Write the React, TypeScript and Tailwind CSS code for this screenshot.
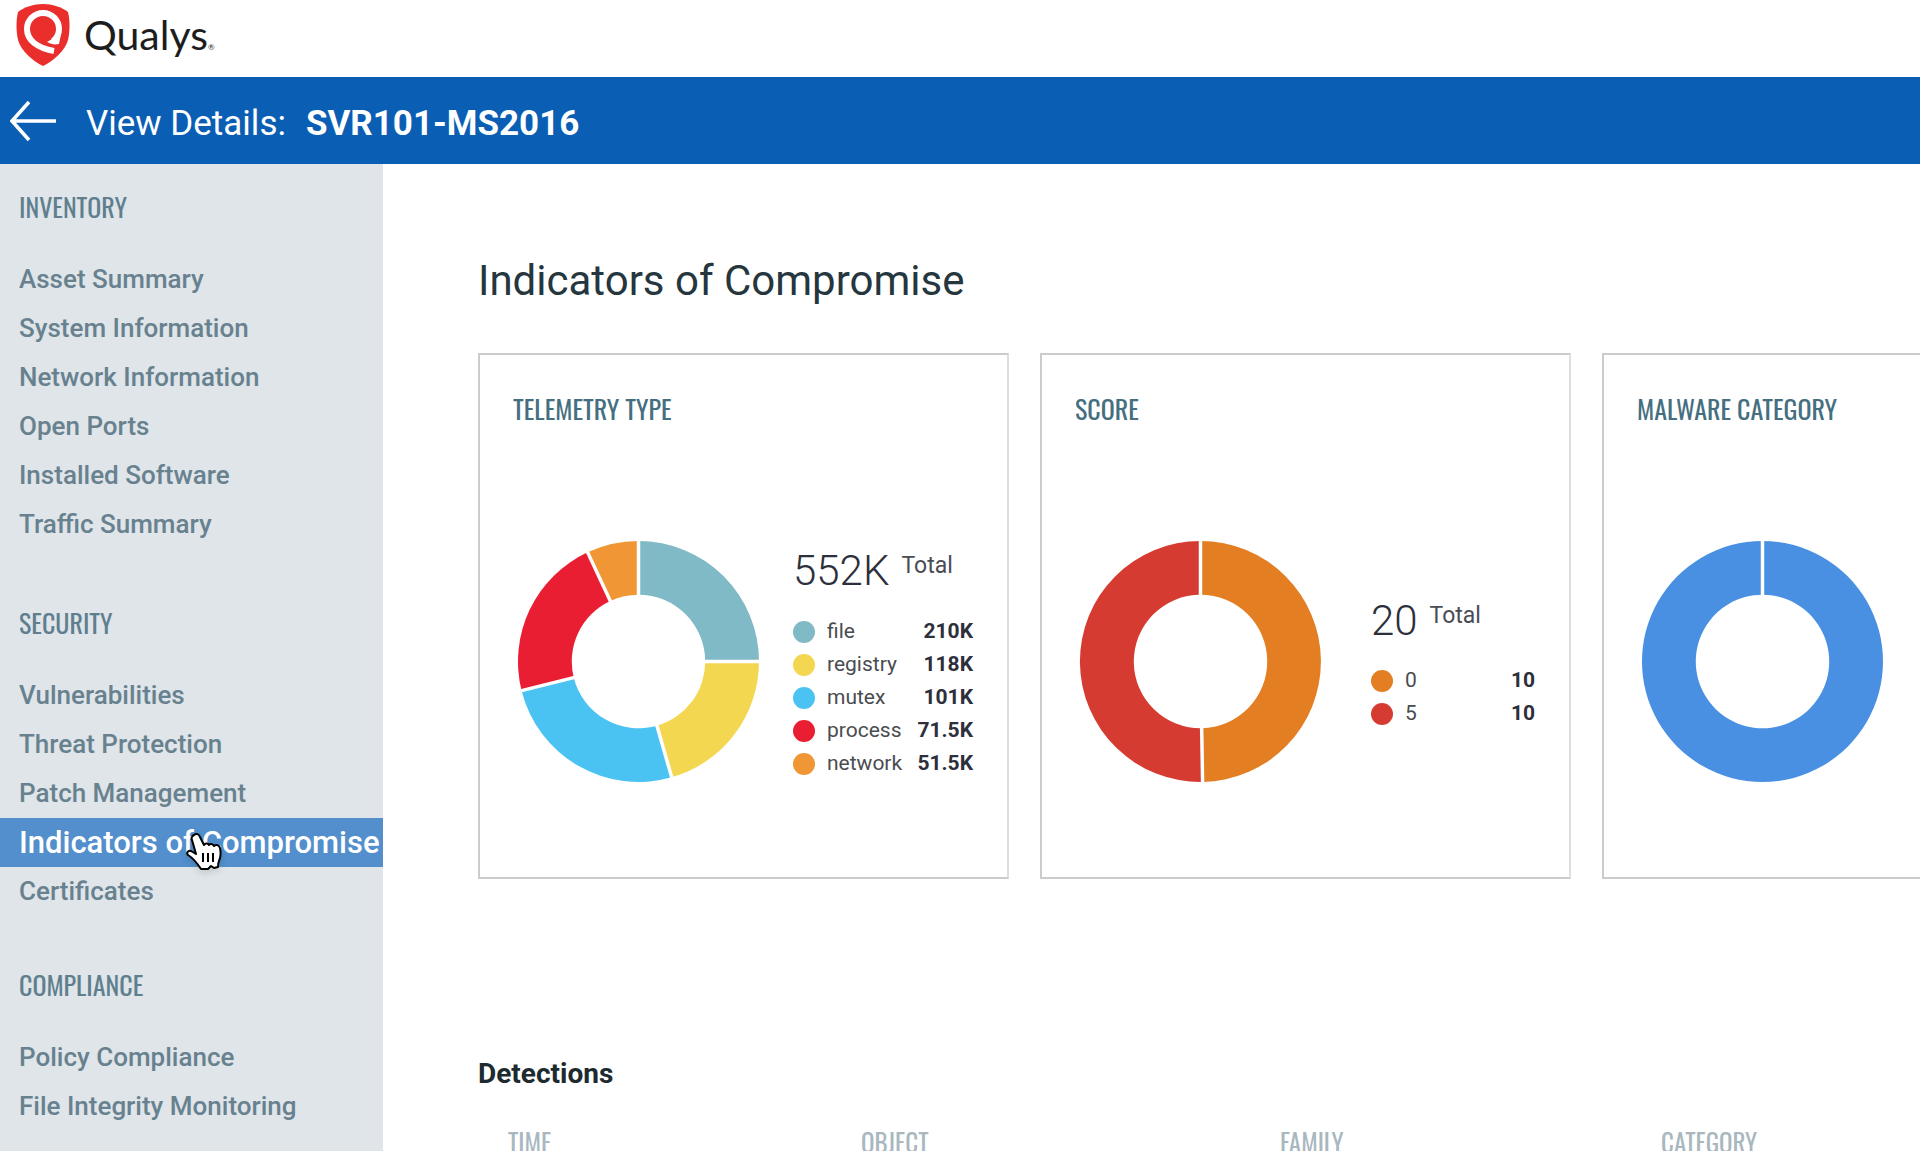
import React from 'react';

interface Slice {
  label: string;
  value: string;
  color: string;
  from: number;
  to: number;
}

interface NavSection {
  title: string;
  spacing: string;
  items: string[];
}

const SECTIONS: NavSection[] = [
  {
    title: 'INVENTORY',
    spacing: 'mt-[19px]',
    items: ['Asset Summary', 'System Information', 'Network Information', 'Open Ports', 'Installed Software', 'Traffic Summary'],
  },
  {
    title: 'SECURITY',
    spacing: 'mt-[50px]',
    items: ['Vulnerabilities', 'Threat Protection', 'Patch Management', 'Indicators of Compromise', 'Certificates'],
  },
  {
    title: 'COMPLIANCE',
    spacing: 'mt-[45px]',
    items: ['Policy Compliance', 'File Integrity Monitoring'],
  },
];

const ACTIVE = 'Indicators of Compromise';

// from / to are degrees, clockwise from 12 o'clock
const TELEMETRY: Slice[] = [
  { label: 'file', value: '210K', color: '#80bac6', from: 0, to: 90 },
  { label: 'registry', value: '118K', color: '#f4d750', from: 90, to: 164 },
  { label: 'mutex', value: '101K', color: '#4bc3f2', from: 164, to: 256 },
  { label: 'process', value: '71.5K', color: '#e91e32', from: 256, to: 335 },
  { label: 'network', value: '51.5K', color: '#f19634', from: 335, to: 360 },
];

const SCORE: Slice[] = [
  { label: '0', value: '10', color: '#e37e22', from: 0, to: 179 },
  { label: '5', value: '10', color: '#d63b31', from: 179, to: 360 },
];

const MALWARE: Slice[] = [{ label: 'Malware', value: '20', color: '#4990e2', from: 0, to: 360 }];

const CONDENSED = "font-['Oswald','Roboto_Condensed','Liberation_Sans_Narrow','Roboto',sans-serif]";

const point = (radius: number, deg: number) => {
  const rad = ((deg - 90) * Math.PI) / 180;
  return `${(122 + radius * Math.cos(rad)).toFixed(2)} ${(122 + radius * Math.sin(rad)).toFixed(2)}`;
};

const arcPath = (from: number, to: number) => {
  const end = to - from === 360 ? to - 0.01 : to;
  const large = end - from > 180 ? 1 : 0;
  return `M${point(121, from)}A121 121 0 ${large} 1 ${point(121, end)}L${point(67, end)}A67 67 0 ${large} 0 ${point(67, from)}Z`;
};

const Donut: React.FC<{ slices: Slice[] }> = ({ slices }) => (
  <svg viewBox="0 0 244 244" className="size-[243px] shrink-0">
    {slices.map(s => (
      <path key={s.label} d={arcPath(s.from, s.to)} fill={s.color} />
    ))}
    {slices.map(s => (
      <path key={s.label} d={`M${point(65, s.from)}L${point(122, s.from)}`} stroke="#fff" strokeWidth={3.5} />
    ))}
  </svg>
);

interface ChartCardProps {
  title: string;
  slices: Slice[];
  total?: string;
  legendWidth?: string;
}

const ChartCard: React.FC<ChartCardProps> = ({ title, slices, total, legendWidth }) => (
  <section className="w-[531px] h-[526px] shrink-0 flex flex-col border-2 border-[#cbcbcb] border-r-[#dedede] bg-white pl-[33px] pr-[34px]">
    <h2 className={`mt-[34px] text-[26px] leading-10 text-[#456f80] ${CONDENSED}`}>{title}</h2>
    <div className="mt-[111px] flex items-center gap-4 pl-1">
      <Donut slices={slices} />
      {total && (
        <div className={`ml-auto mt-1 ${legendWidth}`}>
          <p className="flex items-start gap-3 mb-5">
            <span className="text-[42px] leading-[48px] font-light text-[#2d2f3b]">{total}</span>
            <span className="text-[23px] leading-[38px] text-[#4a4c55]">Total</span>
          </p>
          <ul>
            {slices.map(s => (
              <li key={s.label} className="flex items-center h-[33px] text-[21px]">
                <span className="size-[22px] rounded-full mr-3" style={{ backgroundColor: s.color }} />
                <span className="text-[#4a4c50]">{s.label}</span>
                <span className="ml-auto font-bold text-[#2d2f3b]">{s.value}</span>
              </li>
            ))}
          </ul>
        </div>
      )}
    </div>
  </section>
);

const HandCursor = () => (
  <svg viewBox="0 0 38 42" className="absolute left-[185px] top-[13px] w-[38px] h-[42px] drop-shadow-md pointer-events-none">
    <path
      d="M9 4c2-2 5-1 6 2l4 8c1-2 4-2 5 0 1-2 4-1 5 1 2-2 5-1 6 2 1 5 1 9-1 13-1 2-1 4-1 6l-4 1-3-2-3 3h-7c-4-6-8-11-13-14-2-2 0-5 3-4l5 3-4-14c-1-2 0-4 2-5z"
      fill="#fff"
      stroke="#000"
      strokeWidth={2}
      strokeLinejoin="round"
    />
    <path d="M18 22v9M23 22v9M28 22v9" stroke="#000" strokeWidth={2} />
  </svg>
);

const Shield = () => (
  <svg viewBox="0 0 54 64" className="w-[54px] h-16 shrink-0">
    <path d="M27 1C36 1 46 4 52 9c2 8 2 19 0 28-3 11-15 21-25 26C17 58 5 48 2 37 0 28 0 17 2 9 8 4 18 1 27 1z" fill="#e92e2b" />
    <path d="M37 38C41 35 43 31 43 26A16 16 0 0 0 11 26C11 37 21 45 38 48" fill="none" stroke="#fff" strokeWidth={6} />
    <path d="M31 39l5-3 9-5-2 10c-5 1-8 0-12-2z" fill="#fff" />
  </svg>
);

export default function App() {
  return (
    <div className="h-screen overflow-hidden flex flex-col bg-white font-['Roboto',sans-serif]">
      {/* Brand */}
      <header className="h-[77px] shrink-0 flex items-start pl-4 pt-[3px]">
        <Shield />
        <div className="ml-[14px] mt-2 flex items-baseline font-['Lato',sans-serif] text-[#1d1d1d]">
          <span className="text-[41px] leading-[48px]">Qualys</span>
          <span className="text-[8px]">®</span>
        </div>
      </header>

      {/* Title bar */}
      <div className="h-[87px] shrink-0 flex items-center bg-[#0a5eb4] text-white text-[35px]">
        <button aria-label="Back" className="ml-[10px] mr-[30px]">
          <svg viewBox="0 0 46 42" className="w-[46px] h-[42px]" fill="none" stroke="#fff" strokeWidth={3.5}>
            <path d="M46 21H2M19 2L2 21l17 19" />
          </svg>
        </button>
        <h1 className="flex items-center gap-5 pt-2">
          <span>View Details:</span>
          <span className="font-bold">SVR101-MS2016</span>
        </h1>
      </div>

      <div className="flex flex-1 min-h-0">
        {/* Sidebar */}
        <nav className="w-[383px] shrink-0 bg-[#dfe5e9]">
          {SECTIONS.map(section => (
            <div key={section.title} className={section.spacing}>
              <h3 className={`pl-[19px] mb-6 text-[26px] leading-[48px] text-[#5f7f8f] ${CONDENSED}`}>{section.title}</h3>
              <ul>
                {section.items.map(item => (
                  <li key={item} className="relative">
                    <a
                      href="#"
                      className={`block pl-[19px] leading-[49px] font-medium whitespace-nowrap ${
                        item === ACTIVE ? 'bg-[#528fcc] text-white text-[31px]' : 'text-[#68818f] text-[26px]'
                      }`}
                    >
                      {item}
                    </a>
                    {item === ACTIVE && <HandCursor />}
                  </li>
                ))}
              </ul>
            </div>
          ))}
        </nav>

        {/* Content */}
        <main className="flex-1 min-w-0 overflow-hidden pl-[95px]">
          <h2 className="mt-[89px] text-[42px] leading-[56px] text-[#25363e]">Indicators of Compromise</h2>
          <div className="mt-11 flex gap-[31px]">
            <ChartCard title="TELEMETRY TYPE" slices={TELEMETRY} total="552K" legendWidth="w-[180px]" />
            <ChartCard title="SCORE" slices={SCORE} total="20" legendWidth="w-[164px]" />
            <ChartCard title="MALWARE CATEGORY" slices={MALWARE} />
          </div>

          <h3 className="mt-[175px] text-[28px] leading-10 font-bold text-[#1d2a30]">Detections</h3>
          <table className="mt-7 w-full table-fixed text-left">
            <thead>
              <tr className={`text-[25px] leading-10 text-[#a9b7bf] ${CONDENSED}`}>
                <th className="w-[383px] pl-[30px] font-normal">TIME</th>
                <th className="w-[419px] font-normal">OBJECT</th>
                <th className="w-[381px] font-normal">FAMILY</th>
                <th className="font-normal">CATEGORY</th>
              </tr>
            </thead>
          </table>
        </main>
      </div>
    </div>
  );
}
